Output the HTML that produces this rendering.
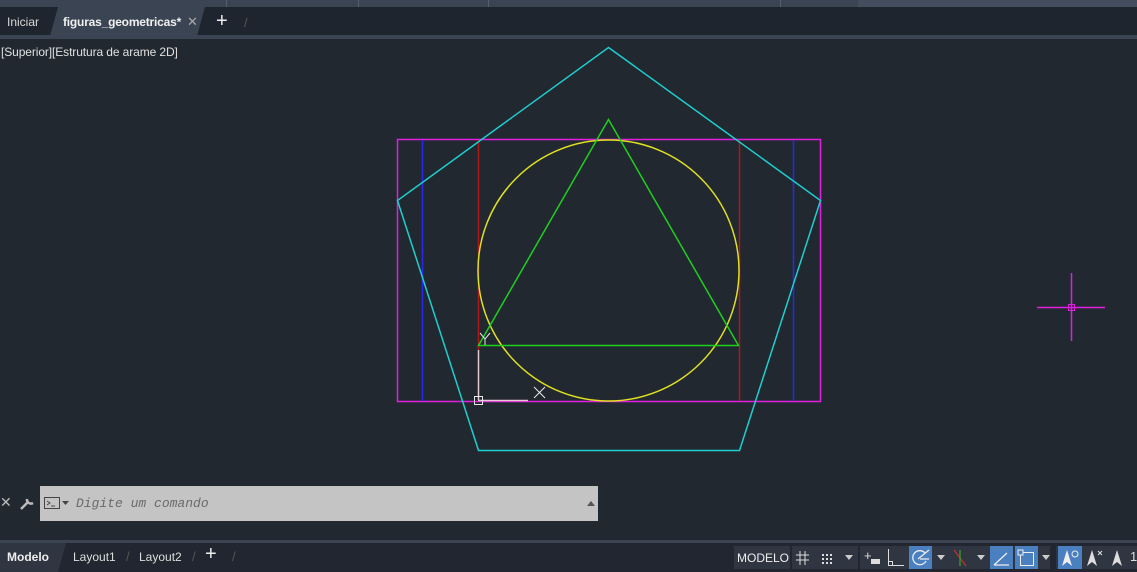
<!DOCTYPE html>
<html><head><meta charset="utf-8"><style>
*{margin:0;padding:0;box-sizing:border-box}
body{width:1137px;height:572px;overflow:hidden;background:#212830;font-family:"Liberation Sans",sans-serif;position:relative;color:#e6e6e6}
.abs{position:absolute}
.top{left:0;top:0;width:1137px;height:7px;background:#3b4453}
.tabs{left:0;top:7px;width:1137px;height:29px;background:#1f252e}
.tabline{left:0;top:35px;width:1137px;height:4px;background:#3b4453}
.t{font-size:13px;position:absolute;top:15px}
.bl{left:0;top:540px;width:1137px;height:3px;background:#3b4453}
.bb{left:0;top:543px;width:1137px;height:29px;background:#212630}
.sb{position:absolute;top:546px;height:23px;background:#2f3642}
</style></head><body>
<div class="abs top"></div>
<div class="abs" style="left:226px;top:0;width:1px;height:7px;background:#555f6e"></div>
<div class="abs" style="left:358px;top:0;width:1px;height:7px;background:#555f6e"></div>
<div class="abs" style="left:488px;top:0;width:1px;height:7px;background:#555f6e"></div>
<div class="abs" style="left:780px;top:0;width:1px;height:7px;background:#555f6e"></div>
<div class="abs" style="left:858px;top:0;width:279px;height:7px;background:#434d5e"></div>
<div class="abs tabs"></div>
<div class="abs" style="left:50px;top:7px;width:155px;height:29px;background:#3b4453;clip-path:polygon(8px 0,100% 0,calc(100% - 8px) 100%,0 100%)"></div>
<div class="abs tabline"></div>
<div class="t" style="left:7px;color:#d8d8d8;font-size:12px">Iniciar</div>
<div class="t" style="left:63px;font-weight:bold;color:#f0f0f0;font-size:12px;letter-spacing:-0.2px">figuras_geometricas*</div>
<div class="t" style="left:187px;color:#aaa;font-size:13px;top:14px">✕</div>
<div class="t" style="left:216px;font-size:20px;top:10px;color:#eee">+</div>
<div class="t" style="left:244px;color:#555">/</div>
<div class="abs" style="left:1px;top:45px;font-size:12px;color:#e0e0e0;letter-spacing:-0.1px">[Superior][Estrutura de arame 2D]</div>

<svg class="abs" style="left:0;top:0" width="1137" height="572">
<g stroke-width="1.5" fill="none">
<rect x="397.5" y="139.5" width="423" height="262" stroke="#e01ee0"/>
<line x1="422.5" y1="140" x2="422.5" y2="401" stroke="#2828f0"/>
<line x1="793.5" y1="140" x2="793.5" y2="401" stroke="#2828f0"/>
<line x1="478.5" y1="140" x2="478.5" y2="350" stroke="#b01818"/>
<line x1="739.5" y1="140" x2="739.5" y2="401" stroke="#b01818"/>
<line x1="478.5" y1="350" x2="478.5" y2="400" stroke="#e8c8d0"/>
<line x1="478" y1="400.5" x2="528" y2="400.5" stroke="#e8c8d0"/>
<line x1="1037" y1="307.5" x2="1105" y2="307.5" stroke="#e01ee0"/>
<line x1="1071.5" y1="273" x2="1071.5" y2="341" stroke="#e01ee0"/>
<circle cx="608.5" cy="270.5" r="130.5" stroke="#e0e020"/>
<polygon points="478.5,345.5 608.5,119.5 738.5,345.5" stroke="#1ed01e"/>
<polygon points="608.5,47.5 820.5,200.5 739.5,450.5 478.5,450.5 397.5,200.5" stroke="#1ecfd0"/>
</g>
<rect x="474.5" y="396.5" width="8" height="8" fill="none" stroke="#e8e8e8"/>
<rect x="1068.5" y="304.5" width="6" height="6" fill="none" stroke="#e01ee0"/>
<path d="M480 333 L485 339 L490 333 M485 339 L485 345" stroke="#e8e8e8" fill="none"/>
<path d="M534 387 L545 398 M545 387 L534 398" stroke="#e8e8e8" fill="none"/>
</svg>

<div class="abs" style="left:0;top:494px;font-size:14px;color:#bbb">✕</div>
<svg class="abs" style="left:18px;top:494px" width="18" height="18"><path d="M3 15 L10 8 M9 5 a4 4 0 0 0 6 4" stroke="#bbb" stroke-width="2.5" fill="none"/></svg>
<div class="abs" style="left:40px;top:486px;width:558px;height:35px;background:#c4c4c4"></div>
<svg class="abs" style="left:43px;top:496px" width="30" height="14"><rect x="1.5" y="1.5" width="15" height="11" fill="none" stroke="#444"/><path d="M4 5 L7 7 L4 9 M8 10 H12" stroke="#444" fill="none"/><path d="M19 5 H26 L22.5 9Z" fill="#444"/></svg>
<div class="abs" style="left:76px;top:496px;font-family:'Liberation Mono',monospace;font-style:italic;font-size:13px;color:#6a6a6a">Digite um comando</div>
<div class="abs" style="left:587px;top:501px;width:0;height:0;border-left:4px solid transparent;border-right:4px solid transparent;border-bottom:5px solid #555"></div>

<div class="abs bl"></div>
<div class="abs bb"></div>
<div class="abs" style="left:0;top:543px;width:66px;height:29px;background:#2f3642;clip-path:polygon(0 0,100% 0,calc(100% - 8px) 100%,0 100%)"></div>
<div class="abs" style="left:7px;top:550px;font-size:12px;font-weight:bold;color:#eee">Modelo</div>
<div class="abs" style="left:73px;top:550px;font-size:12px;color:#ddd">Layout1</div>
<div class="abs" style="left:126px;top:549px;font-size:13px;color:#555">/</div>
<div class="abs" style="left:139px;top:550px;font-size:12px;color:#ddd">Layout2</div>
<div class="abs" style="left:192px;top:549px;font-size:13px;color:#555">/</div>
<div class="abs" style="left:205px;top:543px;font-size:20px;color:#eee">+</div>
<div class="abs" style="left:232px;top:549px;font-size:13px;color:#555">/</div>

<div class="sb" style="left:734px;width:56px"></div>
<div class="abs" style="left:737px;top:551px;font-size:12px;color:#eee">MODELO</div>
<div class="sb" style="left:792px;width:66px"></div>
<svg class="abs" style="left:795px;top:549px" width="50" height="18"><path d="M5 2 V16 M10 2 V16 M1 6 H14 M1 11 H14" stroke="#ddd"/><g fill="#ddd"><rect x="27" y="5" width="2" height="2"/><rect x="31" y="5" width="2" height="2"/><rect x="35" y="5" width="2" height="2"/><rect x="27" y="9" width="2" height="2"/><rect x="31" y="9" width="2" height="2"/><rect x="35" y="9" width="2" height="2"/><rect x="27" y="13" width="2" height="2"/><rect x="31" y="13" width="2" height="2"/><rect x="35" y="13" width="2" height="2"/></g></svg>
<div class="abs" style="left:845px;top:555px;border-left:4px solid transparent;border-right:4px solid transparent;border-top:5px solid #ccc"></div>
<div class="sb" style="left:860px;width:190px"></div>
<div class="abs" style="left:864px;top:548px;font-size:13px;color:#ddd">+</div>
<div class="abs" style="left:871px;top:559px;width:9px;height:5px;background:#ddd"></div>
<svg class="abs" style="left:887px;top:549px" width="18" height="18"><path d="M1.5 0 V16.5 H17" stroke="#ddd" fill="none"/><path d="M1.5 12.5 H5.5 V16.5" stroke="#ddd" fill="none"/></svg>
<div class="abs" style="left:909px;top:546px;width:23px;height:23px;background:#4a80c0"></div>
<svg class="abs" style="left:911px;top:548px" width="20" height="20"><path d="M14 5 A7 7 0 1 0 15 13 M7 11 L18 2 M9 11 H18" stroke="#eee" fill="none" stroke-width="1.3"/></svg>
<div class="abs" style="left:937px;top:555px;border-left:4px solid transparent;border-right:4px solid transparent;border-top:5px solid #ccc"></div>
<svg class="abs" style="left:951px;top:548px" width="18" height="20"><path d="M3 2 L15 18" stroke="#c03030" stroke-width="1.3"/><path d="M9 2 V18" stroke="#30a030" stroke-width="1.3"/></svg>
<div class="abs" style="left:977px;top:555px;border-left:4px solid transparent;border-right:4px solid transparent;border-top:5px solid #ccc"></div>
<div class="abs" style="left:990px;top:546px;width:23px;height:23px;background:#4a80c0"></div>
<svg class="abs" style="left:992px;top:548px" width="20" height="20"><path d="M2 17 H17 M2 17 L15 5" stroke="#eee" fill="none" stroke-width="1.3"/></svg>
<div class="abs" style="left:1015px;top:546px;width:23px;height:23px;background:#4a80c0"></div>
<svg class="abs" style="left:1017px;top:548px" width="20" height="20"><rect x="3.5" y="4.5" width="13" height="13" fill="none" stroke="#eee"/><rect x="1" y="2" width="5" height="5" fill="#4a80c0" stroke="#eee"/></svg>
<div class="abs" style="left:1042px;top:555px;border-left:4px solid transparent;border-right:4px solid transparent;border-top:5px solid #ccc"></div>
<div class="sb" style="left:1056px;width:81px"></div>
<div class="abs" style="left:1058px;top:546px;width:24px;height:23px;background:#4a80c0"></div>
<svg class="abs" style="left:1059px;top:548px" width="22" height="20"><path d="M8 2 L3 18 L8 14 L13 18 Z" fill="#eee"/><circle cx="16" cy="6" r="3" fill="none" stroke="#eee"/></svg>
<svg class="abs" style="left:1084px;top:548px" width="22" height="20"><path d="M8 2 L3 18 L8 14 L13 18 Z" fill="#ddd"/><path d="M14 3 L18 7 M18 3 L14 7" stroke="#ddd"/></svg>
<svg class="abs" style="left:1108px;top:548px" width="22" height="20"><path d="M9 2 L4 18 L9 14 L14 18 Z" fill="#ddd"/></svg>
<div class="abs" style="left:1130px;top:549px;font-size:13px;color:#ddd">1</div>
</body></html>
